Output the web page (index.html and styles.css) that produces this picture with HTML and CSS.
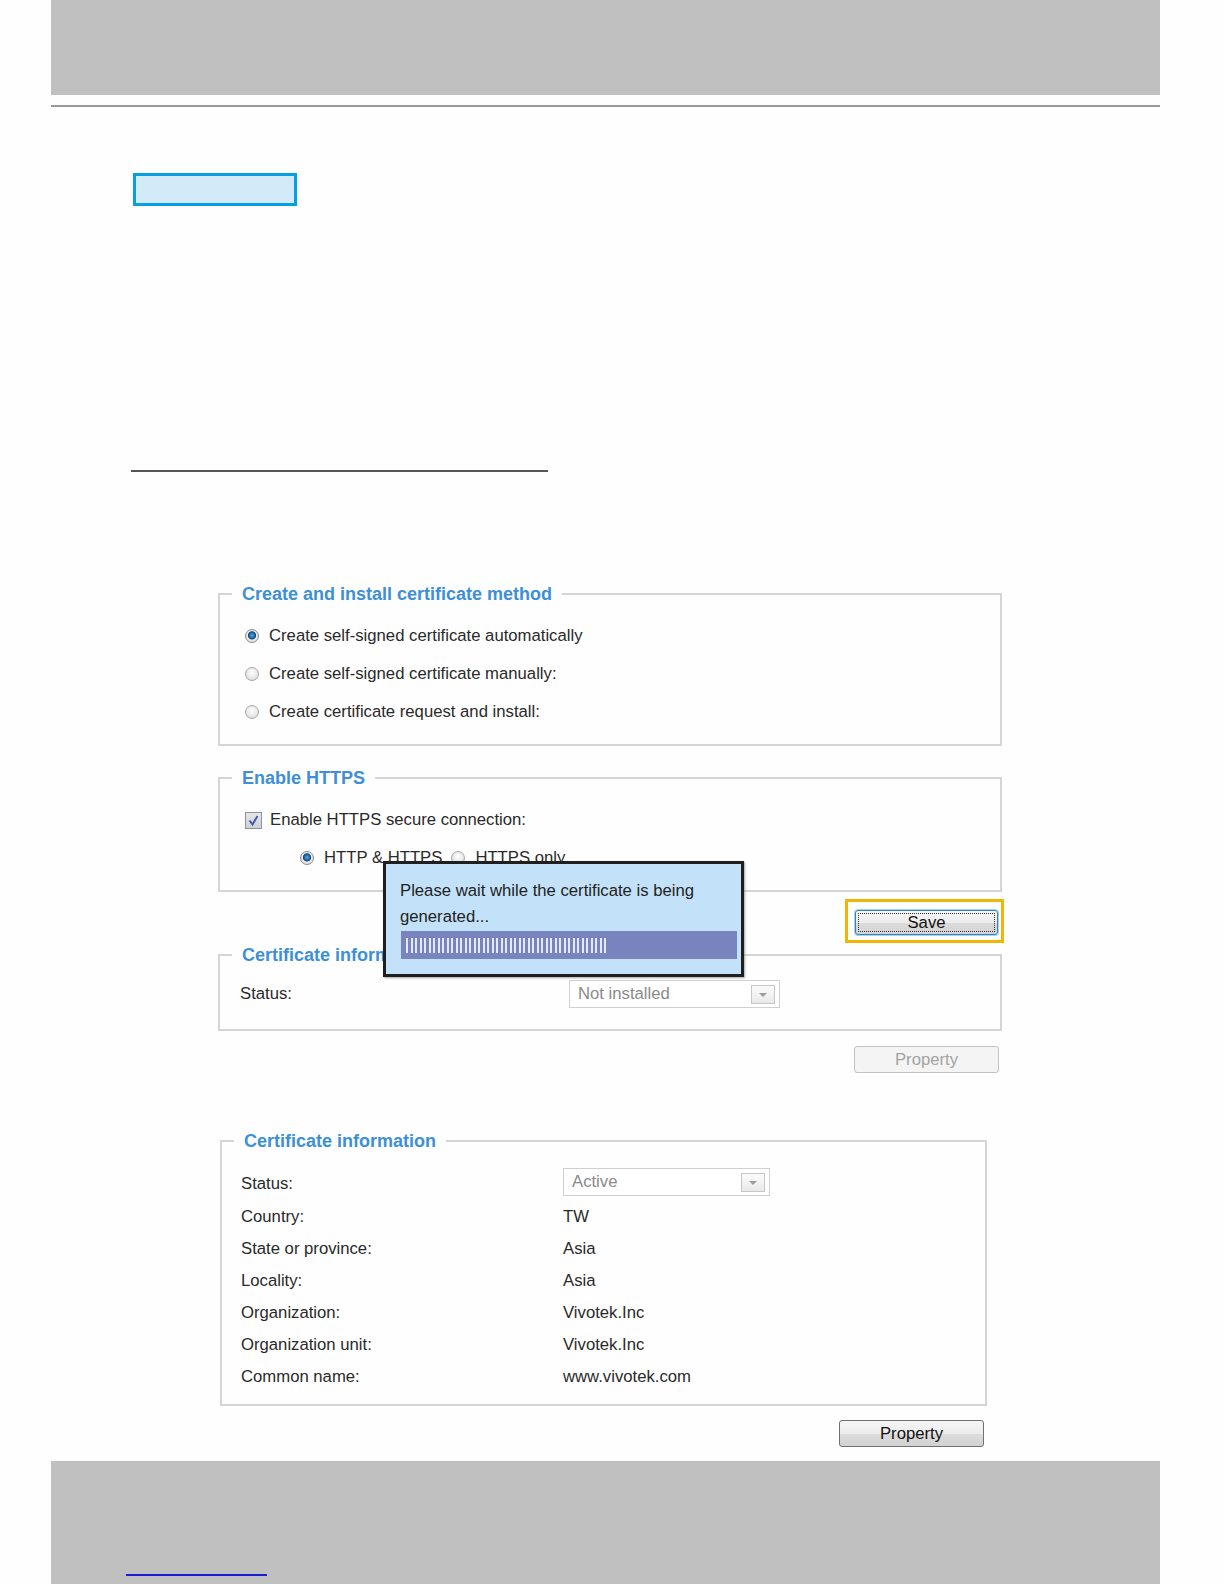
FILE: index.html
```html
<!DOCTYPE html>
<html lang="en">
<head>
<meta charset="utf-8">
<title>HTTPS certificate</title>
<link rel="stylesheet" href="styles.css">
</head>
<body>
<div class="header"></div>
<div class="rule-top"></div>
<div class="tab-box"></div>
<div class="rule-mid"></div>

<div class="panel">
  <fieldset class="group method">
    <legend>Create and install certificate method</legend>
    <div class="opt"><span class="radio checked"></span><span>Create self-signed certificate automatically</span></div>
    <div class="opt"><span class="radio"></span><span>Create self-signed certificate manually:</span></div>
    <div class="opt"><span class="radio"></span><span>Create certificate request and install:</span></div>
  </fieldset>

  <fieldset class="group https">
    <legend>Enable HTTPS</legend>
    <div class="opt">
      <span class="checkbox"><svg width="17" height="17" viewBox="0 0 17 17"><path d="M4.5 8.5 L7.5 12.5 L12.5 4" fill="none" stroke="#4b58a6" stroke-width="2"/></svg></span>
      <span>Enable HTTPS secure connection:</span>
    </div>
    <div class="opt sub">
      <span class="radio checked"></span><span>HTTP &amp; HTTPS</span>
      <span class="radio second"></span><span>HTTPS only</span>
    </div>
  </fieldset>

  <div class="save-row">
    <div class="highlight"><button class="btn save" type="button"><span class="focus">Save</span></button></div>
  </div>

  <fieldset class="group status-group">
    <legend>Certificate information</legend>
    <div class="status-row">
      <span class="label">Status:</span>
      <div class="select wide"><span>Not installed</span><span class="arrow"></span></div>
    </div>
  </fieldset>

  <div class="prop-row">
    <button class="btn disabled" type="button">Property</button>
  </div>

  <div class="popup">
    <p>Please wait while the certificate is being generated...</p>
    <div class="progress"><div class="stripes"></div></div>
  </div>

  <fieldset class="group cert">
    <legend>Certificate information</legend>
    <div class="info">
      <span class="k first">Status:</span>
      <div class="v first"><div class="select"><span>Active</span><span class="arrow"></span></div></div>
      <span class="k">Country:</span><span class="v">TW</span>
      <span class="k">State or province:</span><span class="v">Asia</span>
      <span class="k">Locality:</span><span class="v">Asia</span>
      <span class="k">Organization:</span><span class="v">Vivotek.Inc</span>
      <span class="k">Organization unit:</span><span class="v">Vivotek.Inc</span>
      <span class="k">Common name:</span><span class="v">www.vivotek.com</span>
    </div>
  </fieldset>

  <div class="prop-row last">
    <button class="btn" type="button">Property</button>
  </div>
</div>

<div class="footer"><span class="link-line"></span></div>
</body>
</html>
```

FILE: styles.css
```css
html, body {
  margin: 0;
  padding: 0;
  background: #fefefe;
}
body {
  font-family: "Liberation Sans", Arial, sans-serif;
  color: #2a2a2a;
  font-size: 16.7px;
  height: 1584px;
  overflow: hidden;
}
.header {
  margin: 0 64px 0 51px;
  height: 95px;
  background: #c0c0c0;
}
.rule-top {
  margin: 10px 64px 0 51px;
  height: 2px;
  background: #9b9b9b;
}
.tab-box {
  margin: 66px 0 0 133px;
  width: 164px;
  height: 33px;
  box-sizing: border-box;
  border: 3px solid #05a0e2;
  background: #d3ebf9;
}
.rule-mid {
  margin: 264px 0 0 131px;
  width: 417px;
  height: 2px;
  background: #555;
}
.panel {
  position: relative;
  margin: 112px 0 0 218px;
  width: 784px;
}
.group {
  margin: 0;
  padding: 0;
  border: 2px solid #d5d5d5;
  min-width: 0;
}
.group legend {
  margin-left: 12px;
  padding: 0 10px;
  font-weight: bold;
  font-size: 18px;
  line-height: 20px;
  color: #3d8fd8;
}
.method {
  padding: 13px 0 13px 0;
}
.https {
  margin-top: 22px;
  padding: 13px 0 13px 0;
}
.opt {
  display: flex;
  align-items: center;
  height: 38px;
  gap: 10px;
  padding-left: 25px;
}
.opt.sub {
  padding-left: 80px;
}
.radio {
  width: 14px;
  height: 14px;
  box-sizing: border-box;
  border-radius: 50%;
  border: 1px solid #a9a9a9;
  background: radial-gradient(circle at 50% 40%, #ffffff 0%, #e6e6e6 60%, #cfcfcf 100%);
  flex: none;
}
.radio.checked {
  border-color: #8c8c8c;
  background: radial-gradient(circle at 50% 45%, #5aa8e0 0%, #1f6fb0 28%, #17466e 42%, #eaeaea 50%, #d2d2d2 100%);
}
.radio.second {
  margin-left: -1px;
}
.checkbox {
  width: 17px;
  height: 17px;
  box-sizing: border-box;
  border: 1px solid #8f90a3;
  background: linear-gradient(#e6e6ea, #cfd0d8);
  flex: none;
  margin-right: -2px;
}
.checkbox svg {
  display: block;
  margin: -1px;
}
.save-row {
  display: flex;
  justify-content: flex-end;
  margin: 7px -2px 0 0;
}
.highlight {
  border: 3px solid #f1b506;
  padding: 8px 3px 5px 7px;
}
.btn {
  font-family: "Liberation Sans", Arial, sans-serif;
  font-size: 16.7px;
  color: #111;
  width: 145px;
  height: 27px;
  padding: 0;
  border: 1px solid #707070;
  border-radius: 3px;
  background: linear-gradient(#f6f6f6 0%, #ececec 50%, #dcdcdc 51%, #d2d2d2 100%);
  cursor: default;
}
.btn.save {
  width: 143px;
  height: 25px;
  border-color: #3c7fb1;
  box-shadow: 0 0 0 1px #9fd4f3;
  padding: 2px;
}
.btn.save .focus {
  display: flex;
  align-items: center;
  justify-content: center;
  height: 100%;
  box-sizing: border-box;
  border: 1px dotted #333;
}
.btn.disabled {
  color: #a3a3a3;
  border-color: #c2c2c2;
  background: #f4f4f4;
}
.status-group {
  margin-top: 2px;
  padding: 10px 0 16px 20px;
}
.status-group legend {
  margin-left: -8px;
}
.status-row {
  display: flex;
  align-items: center;
  height: 38px;
}
.status-row .label {
  width: 329px;
  flex: none;
}
.select {
  display: flex;
  align-items: center;
  justify-content: space-between;
  width: 207px;
  height: 28px;
  box-sizing: border-box;
  border: 1px solid #d0d0d0;
  background: #fff;
  color: #8a8a8a;
  padding: 0 4px 0 8px;
}
.select.wide {
  width: 211px;
}
.arrow {
  position: relative;
  width: 24px;
  height: 19px;
  box-sizing: border-box;
  border: 1px solid #c7c7c7;
  background: linear-gradient(#fbfbfb, #e9e9e9);
}
.arrow::after {
  content: "";
  position: absolute;
  left: 7px;
  top: 7px;
  border-left: 4px solid transparent;
  border-right: 4px solid transparent;
  border-top: 4px solid #9c9c9c;
}
.prop-row {
  display: flex;
  justify-content: flex-end;
  margin-top: 15px;
  padding-right: 3px;
}
.prop-row.last {
  margin-top: 14px;
  padding-right: 18px;
}
.popup {
  position: absolute;
  left: 165px;
  top: 277px;
  width: 361px;
  height: 116px;
  box-sizing: border-box;
  border: 3px solid #1f1f1f;
  background: #c3e2f9;
  box-shadow: 1px 1px 2px rgba(0, 0, 0, 0.35);
  padding: 14px 0 0 14px;
  color: #222;
}
.popup p {
  margin: 0;
  width: 330px;
  line-height: 26px;
}
.progress {
  margin: 1px 0 0 1px;
  width: 336px;
  height: 28px;
  background: #7784be;
  display: flex;
  align-items: center;
  padding-left: 5px;
  box-sizing: border-box;
}
.stripes {
  width: 202px;
  height: 15px;
  background: repeating-linear-gradient(90deg, #e4e8f8 0 2px, transparent 2px 5px, #e4e8f8 5px 7px, transparent 7px 9px);
}
.cert {
  margin: 58px 0 0 2px;
  width: 767px;
  box-sizing: border-box;
  padding: 12px 0 11px 19px;
}
.cert legend {
  margin-left: -7px;
}
.info {
  display: grid;
  grid-template-columns: 322px 1fr;
  grid-template-rows: 38px;
  grid-auto-rows: 32px;
  align-items: center;
}
.info .first {
  height: 38px;
  display: flex;
  align-items: center;
}
.info .k.first {
  padding-top: 4px;
  box-sizing: border-box;
}
.info .v {
  color: #2a2a2a;
}
.footer {
  margin: 14px 64px 0 51px;
  height: 124px;
  background: #c0c0c0;
  box-sizing: border-box;
  padding: 113px 0 0 75px;
}
.link-line {
  display: block;
  width: 141px;
  height: 2px;
  background: #1c1cd4;
}
```
